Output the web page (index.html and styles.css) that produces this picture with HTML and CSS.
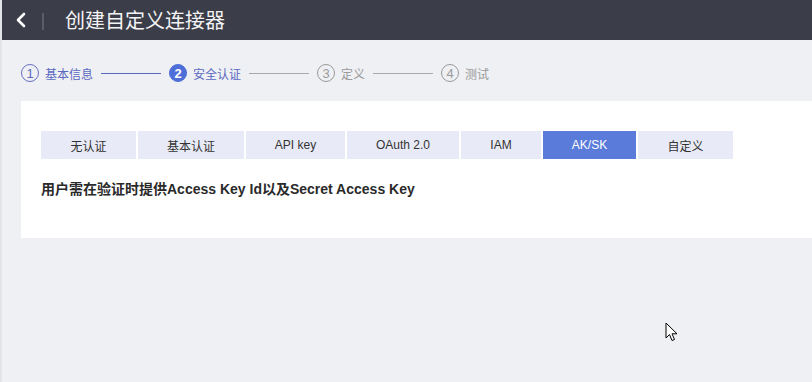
FILE: index.html
```html
<!DOCTYPE html>
<html lang="zh">
<head>
<meta charset="utf-8">
<title>创建自定义连接器</title>
<link rel="stylesheet" href="styles.css">
</head>
<body>
<header class="topbar">
  <span class="back">
    <svg width="12" height="16" viewBox="0 0 12 16"><path d="M9 2 L3 8 L9 14" fill="none" stroke="#fff" stroke-width="2.6" stroke-linecap="round" stroke-linejoin="round"/></svg>
  </span>
  <span class="sep"></span>
  <h1 class="title">创建自定义连接器</h1>
</header>
<main class="page">
  <nav class="steps">
    <div class="step done"><span class="num">1</span><span class="label">基本信息</span></div>
    <span class="line done"></span>
    <div class="step current"><span class="num">2</span><span class="label">安全认证</span></div>
    <span class="line"></span>
    <div class="step"><span class="num">3</span><span class="label">定义</span></div>
    <span class="line"></span>
    <div class="step"><span class="num">4</span><span class="label">测试</span></div>
  </nav>
  <section class="card">
    <div class="tabs">
      <span class="tab" style="width:95px">无认证</span>
      <span class="tab" style="width:106px">基本认证</span>
      <span class="tab" style="width:99px">API key</span>
      <span class="tab" style="width:112px">OAuth 2.0</span>
      <span class="tab" style="width:80px">IAM</span>
      <span class="tab active" style="width:93px">AK/SK</span>
      <span class="tab" style="width:95px">自定义</span>
    </div>
    <p class="desc">用户需在验证时提供Access Key Id以及Secret Access Key</p>
  </section>
</main>
<svg class="cursor" width="14" height="21" viewBox="0 0 14 21"><path d="M1 1 L1 16 L4.5 12.5 L7 18.5 L9.5 17.5 L7 11.8 L12 11.8 Z" fill="#fff" stroke="#000" stroke-width="1" stroke-linejoin="round"/></svg>
</body>
</html>
```
FILE: styles.css
```css
html, body {
  margin: 0;
  padding: 0;
}
body {
  width: 812px;
  height: 382px;
  overflow: hidden;
  background: #eff0f4;
  font-family: "Liberation Sans", "Noto Sans CJK SC", sans-serif;
  color: #333;
  border-left: 2px solid #e3e4e8;
  box-sizing: border-box;
  position: relative;
}
.topbar {
  height: 40px;
  background: #3b3d48;
  display: flex;
  align-items: center;
  margin-left: -2px;
}
.back {
  width: 12px;
  height: 16px;
  margin-left: 15px;
  display: flex;
}
.sep {
  width: 2px;
  height: 17px;
  background: #5a5c68;
  margin-left: 15px;
  margin-top: 3px;
}
.title {
  margin: 0 0 0 21px;
  font-size: 20px;
  font-weight: normal;
  color: #f4f4f6;
  font-family: "Noto Sans CJK SC", sans-serif;
  line-height: 40px;
}
.page {
  padding: 21px 0 0 19px;
}
.steps {
  display: flex;
  align-items: center;
  height: 24px;
}
.step {
  display: flex;
  align-items: center;
  color: #9a9a9a;
  font-size: 12px;
  font-family: "Noto Sans CJK SC", sans-serif;
}
.num {
  width: 16px;
  height: 16px;
  border: 1px solid #9a9a9a;
  border-radius: 50%;
  display: flex;
  align-items: center;
  justify-content: center;
  font-size: 13px;
  font-family: "Liberation Sans", sans-serif;
  margin-right: 6px;
}
.step.done, .step.current {
  color: #5a68c0;
}
.step.done .num {
  border-color: #6670c4;
  color: #5a68c0;
}
.step.current .num {
  background: #4f6fd8;
  border-color: #4f6fd8;
  color: #fff;
  font-weight: bold;
}
.line {
  width: 60px;
  height: 1px;
  background: #a9a9a9;
  margin: 0 8px;
}
.line.done {
  background: #5a68c0;
}
.card {
  margin-top: 16px;
  background: #fff;
  height: 137px;
  padding: 30px 0 0 20px;
  box-sizing: border-box;
}
.tabs {
  display: flex;
  gap: 2px;
}
.tab {
  height: 28px;
  background: #e8ebf7;
  display: flex;
  align-items: center;
  justify-content: center;
  font-size: 12px;
  color: #333;
  font-family: "Liberation Sans", "Noto Sans CJK SC", sans-serif;
}
.tab.active {
  background: #5b7bda;
  color: #fff;
}
.desc {
  margin: 22px 0 0 0;
  font-size: 14px;
  line-height: 16px;
  font-weight: bold;
  color: #2a2a2a;
  font-family: "Liberation Sans", "Noto Sans CJK SC", sans-serif;
}
.cursor {
  position: absolute;
  left: 663px;
  top: 322px;
}
```
